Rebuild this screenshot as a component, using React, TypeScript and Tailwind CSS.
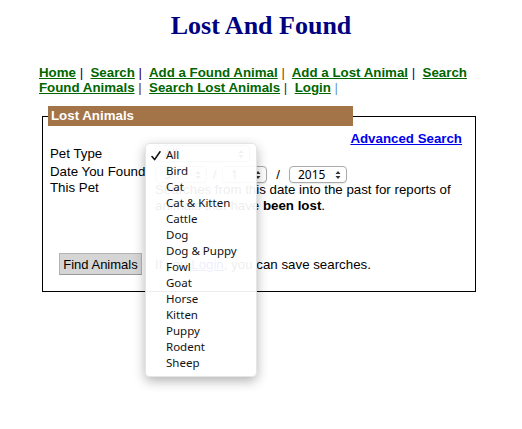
import type { ReactNode } from 'react'

// ── Data ─────────────────────────────────────────────────────────────────────

const NAV = [
  { label: 'Home', sep: '#000066' },
  { label: 'Search', sep: '#330033' },
  { label: 'Add a Found Animal', sep: '#993300' },
  { label: 'Add a Lost Animal', sep: '#000099' },
  { label: 'Search Found Animals', sep: '#663300' },
  { label: 'Search Lost Animals', sep: '#333333' },
  { label: 'Login', sep: '#6699cc' },
]

const PET_TYPES = [
  'All', 'Bird', 'Cat', 'Cat & Kitten', 'Cattle', 'Dog', 'Dog & Puppy',
  'Fowl', 'Goat', 'Horse', 'Kitten', 'Puppy', 'Rodent', 'Sheep',
]

// ── Page ─────────────────────────────────────────────────────────────────────

export default function App() {
  return (
    <div className="min-h-screen bg-white pt-[13px] font-['Liberation_Sans',Arial,sans-serif] text-black">
      <h1 className="text-center font-['Liberation_Serif','Times_New_Roman',serif] text-[26px] font-bold leading-none text-[#000080]">
        Lost And Found
      </h1>

      {/* Nav */}
      <nav className="mt-[26px] px-[39px] text-[13.3px] font-bold leading-[15px]">
        {NAV.map((item) => (
          <span key={item.label}>
            <a href="#" className="text-[#006600] underline">
              {item.label}
            </a>
            <span className="font-normal" style={{ color: item.sep }}>
              {' |'}
            </span>
            {'\u00a0 '}
          </span>
        ))}
      </nav>

      {/* Search form */}
      <fieldset className="ml-[42px] mt-[11px] w-[434px] border border-black pb-[16px] text-[13.3px] leading-[15px]">
        <legend className="ml-[5px] w-[305px] bg-[#a47449] pl-[3px] text-[13.3px] font-bold leading-[20px] text-white">
          Lost Animals
        </legend>

        <div className="flex justify-end pr-[13px] pt-[5px]">
          <a href="#" className="font-bold text-[#0000ee] underline">
            Advanced Search
          </a>
        </div>

        {/* Pet type */}
        <div className="flex pl-[7px]">
          <div className="h-[18px] w-[105px]">Pet Type</div>
          <div className="relative">
            <SelectBox value="All" className="-mt-px w-[95px]" />
            <PetMenu />
          </div>
        </div>

        {/* Date */}
        <div className="flex pl-[7px] leading-[16px]">
          <div className="w-[105px]">Date You Found This Pet</div>
          <div className="flex-1 pr-[10px]">
            <div className="flex h-[18px] items-start pt-[2px]">
              <SelectBox value="3" className="w-[52px]" />
              <span className="w-[15px] text-center leading-[17px]">/</span>
              <SelectBox value="1" className="w-[45px]" />
              <span className="w-[22px] text-center leading-[17px]">/</span>
              <SelectBox value="2015" className="w-[58px]" />
            </div>
            <p>
              Searches from this date into the past for reports of animals that have{' '}
              <b>been lost</b>.
            </p>
          </div>
        </div>

        {/* Submit */}
        <div className="mt-[39px] flex items-center pl-[7px]">
          <div className="w-[105px] pl-[9px]">
            <button className="h-[22px] w-[83px] border border-[#b4b4b4] border-b-[#999] bg-[#d5d5d5] text-[13px] leading-none text-black">
              Find Animals
            </button>
          </div>
          <p>
            If you{' '}
            <a href="#" className="text-[#0000ee] underline">
              Login
            </a>
            , you can save searches.
          </p>
        </div>
      </fieldset>
    </div>
  )
}

// ── Controls ─────────────────────────────────────────────────────────────────

function SelectBox({ value, className = '' }: { value: string; className?: string }) {
  return (
    <div
      className={`flex h-[17px] items-center justify-between rounded-[4px] border border-[#ababab] bg-white pl-[8px] pr-[5px] font-['Noto_Sans',sans-serif] text-[12px] leading-none shadow-[0_1px_1px_rgba(0,0,0,0.08)] ${className}`}
    >
      <span>{value}</span>
      <UpDown />
    </div>
  )
}

function UpDown() {
  return (
    <svg width="6" height="10" viewBox="0 0 6 10" className="shrink-0">
      <path d="M3 1 L5.5 4 H0.5 Z" fill="#333" />
      <path d="M3 9 L5.5 6 H0.5 Z" fill="#333" />
    </svg>
  )
}

function PetMenu() {
  return (
    <div className="absolute left-[-10px] top-[-3px] z-10 w-[112px] rounded-[5px] border border-black/10 bg-white/[0.93] pb-[5px] pt-[3px] font-['Noto_Sans',sans-serif] text-[11.5px] text-[#111] shadow-[0_4px_12px_rgba(0,0,0,0.3)]">
      {PET_TYPES.map((p) => (
        <MenuItem key={p} checked={p === 'All'}>
          {p}
        </MenuItem>
      ))}
    </div>
  )
}

function MenuItem({ children, checked }: { children: ReactNode; checked?: boolean }) {
  return (
    <div className="relative h-[16px] pl-[20px] leading-[16px]">
      {checked && (
        <svg width="10" height="10" viewBox="0 0 10 10" className="absolute left-[5px] top-[4px]">
          <path
            d="M1 5.5 L3.6 8.6 L9 0.8"
            fill="none"
            stroke="#111"
            strokeWidth="1.6"
            strokeLinecap="round"
            strokeLinejoin="round"
          />
        </svg>
      )}
      {children}
    </div>
  )
}
